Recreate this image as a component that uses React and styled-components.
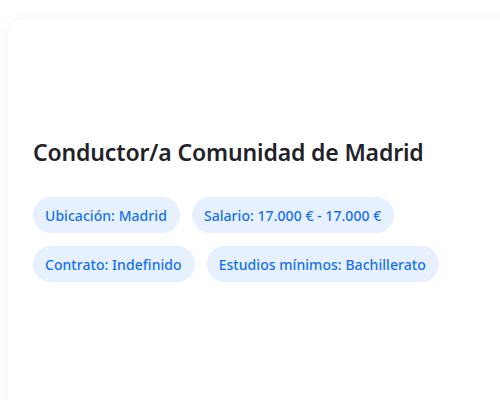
import React from "react";
import styled, { createGlobalStyle } from "styled-components";

const Global = createGlobalStyle`
  html, body { margin: 0; padding: 0; background: #ffffff; }
  body { font-family: "Noto Sans", "Open Sans", sans-serif; }
`;

const Page = styled.div`
  padding: 20px 0 0 8px;
  height: 400px;
  box-sizing: border-box;
  overflow: hidden;
`;

const Card = styled.article`
  background: #ffffff;
  border-radius: 14px;
  box-shadow: 0 2px 18px rgba(0, 0, 0, 0.06);
  width: 520px;
  min-height: 420px;
  box-sizing: border-box;
  padding: 118px 24px 24px 25px;
`;

const Title = styled.h2`
  margin: 0 0 30px;
  font-size: 23px;
  line-height: 29px;
  font-weight: 600;
  letter-spacing: -0.15px;
  color: #1f2328;
`;

const Tags = styled.div`
  display: flex;
  flex-wrap: wrap;
  gap: 13px 12px;
  max-width: 430px;
`;

const Tag = styled.span`
  display: inline-flex;
  align-items: center;
  height: 36px;
  padding: 0 13px 0 12px;
  border-radius: 18px;
  background: #e6f0ff;
  color: #1570ef;
  font-size: 14px;
  font-weight: 500;
  letter-spacing: 0.05px;
  white-space: nowrap;
`;

const tags = [
  "Ubicación: Madrid",
  "Salario: 17.000 € - 17.000 €",
  "Contrato: Indefinido",
  "Estudios mínimos: Bachillerato",
];

export default function App() {
  return (
    <>
      <Global />
      <Page>
        <Card>
          <Title>Conductor/a Comunidad de Madrid</Title>
          <Tags>
            {tags.map((t) => (
              <Tag key={t}>{t}</Tag>
            ))}
          </Tags>
        </Card>
      </Page>
    </>
  );
}
